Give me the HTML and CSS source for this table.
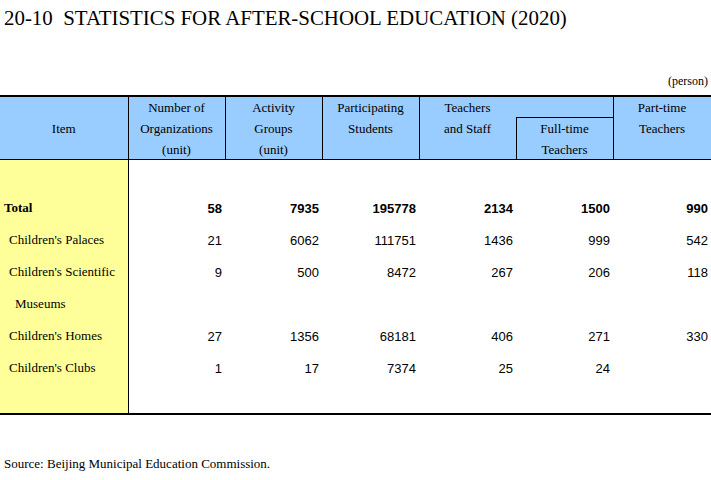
FILE: index.html
```html
<!DOCTYPE html>
<html>
<head>
<meta charset="utf-8">
<link rel="stylesheet" href="styles.css">
</head>
<body>
<h1 class="title">20-10&nbsp; STATISTICS FOR AFTER-SCHOOL EDUCATION (2020)</h1>
<div class="unit">(person)</div>
<table class="stats">
  <colgroup>
    <col class="c-item"><col class="c-num"><col class="c-num"><col class="c-num"><col class="c-num"><col class="c-num"><col class="c-last">
  </colgroup>
  <thead>
    <tr class="h1">
      <th rowspan="2" class="mid">Item</th>
      <th rowspan="2"><div class="hc">Number of<br>Organizations<br>(unit)</div></th>
      <th rowspan="2"><div class="hc">Activity<br>Groups<br>(unit)</div></th>
      <th rowspan="2"><div class="hc">Participating<br>Students</div></th>
      <th rowspan="2" class="nor"><div class="hc">Teachers<br>and Staff</div></th>
      <th class="nol"></th>
      <th rowspan="2"><div class="hc">Part-time<br>Teachers</div></th>
    </tr>
    <tr class="h2">
      <th class="sub"><div class="sc">Full-time<br>Teachers</div></th>
    </tr>
  </thead>
  <tbody>
    <tr class="gap"><td class="item"></td><td></td><td></td><td></td><td></td><td></td><td></td></tr>
    <tr class="total"><td class="item">Total</td><td>58</td><td>7935</td><td>195778</td><td>2134</td><td>1500</td><td>990</td></tr>
    <tr><td class="item l1">Children's Palaces</td><td>21</td><td>6062</td><td>111751</td><td>1436</td><td>999</td><td>542</td></tr>
    <tr><td class="item l1">Children's Scientific</td><td>9</td><td>500</td><td>8472</td><td>267</td><td>206</td><td>118</td></tr>
    <tr><td class="item l2">Museums</td><td></td><td></td><td></td><td></td><td></td><td></td></tr>
    <tr><td class="item l1">Children's Homes</td><td>27</td><td>1356</td><td>68181</td><td>406</td><td>271</td><td>330</td></tr>
    <tr><td class="item l1">Children's Clubs</td><td>1</td><td>17</td><td>7374</td><td>25</td><td>24</td><td></td></tr>
    <tr class="end"><td class="item"></td><td></td><td></td><td></td><td></td><td></td><td></td></tr>
  </tbody>
</table>
<p class="source">Source: Beijing Municipal Education Commission.</p>
</body>
</html>
```
FILE: styles.css
```css
html, body {
  margin: 0;
  padding: 0;
  background: #fff;
  color: #000;
  font-family: "Liberation Serif", "Times New Roman", serif;
}
.title {
  margin: 0;
  padding: 6px 0 0 4px;
  height: 30px;
  font-size: 20.9px;
  font-weight: normal;
  line-height: 24px;
  white-space: nowrap;
}
.unit {
  margin-top: 38px;
  height: 21px;
  text-align: right;
  padding-right: 3px;
  font-size: 12px;
  line-height: 14px;
}
.stats {
  width: 711px;
  table-layout: fixed;
  border-collapse: collapse;
  border-top: 2px solid #000;
  border-bottom: 2px solid #000;
}
.c-item { width: 128px; }
.c-num { width: 97px; }
.c-last { width: 98px; }
.stats th {
  background: #99ccff;
  font-family: "Liberation Serif", "Times New Roman", serif;
  font-weight: normal;
  font-size: 13px;
  line-height: 21px;
  padding: 0;
  vertical-align: top;
  text-align: center;
  border-left: 1px solid #000;
  border-right: 1px solid #000;
  border-bottom: 1px solid #000;
}
.stats th .hc { height: 61px; }
.stats th .sc { height: 41px; }
.stats th:first-child { border-left: none; }
.stats th.mid { vertical-align: middle; }
.stats tr.h1 th { height: 20px; }
.stats tr.h1 th.nol { border-left: none; border-bottom: 1px solid #000; }
.stats tr.h1 th.nor { border-right: none; }
.stats th.sub { height: 41px; border-left: 1px solid #000; }
.stats td {
  font-family: "Liberation Sans", Arial, sans-serif;
  font-size: 13px;
  height: 32px;
  padding: 0 3px 0 0;
  text-align: right;
  vertical-align: middle;
}
.stats td.item {
  background: #ffff99;
  border-right: 1px solid #000;
  text-align: left;
  font-family: "Liberation Serif", "Times New Roman", serif;
  padding-left: 4px;
}
.stats td.l1 { padding-left: 9px; }
.stats td.l2 { padding-left: 15px; }
.stats tr.total td { font-weight: bold; }
.stats tr.end td { height: 29px; }
.source {
  margin: 41px 0 0 0;
  padding-left: 4px;
  font-size: 13px;
  line-height: 16px;
}
```
